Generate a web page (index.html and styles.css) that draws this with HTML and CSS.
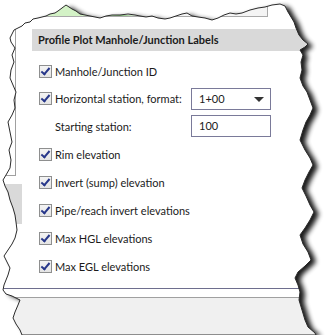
FILE: index.html
```html
<!DOCTYPE html>
<html lang="en">
<head>
  <meta name="viewport" content="width=device-width, initial-scale=1.0">
  <title>Profile Plot Manhole/Junction Labels</title>
  <link rel="stylesheet" href="styles.css">
</head>
<body>

  <div class="page">
    <!-- window behind, mostly torn away -->
    <div class="backdrop">
      <div class="backdrop-pane">
        <svg class="hill" width="120" height="17" viewBox="0 0 120 17">
          <polygon points="0,17 10,14 20,12 28,9 34,6 36,4 40,7 46,10 52,12 60,13 70,14 80,15 100,16 120,17" fill="#d3f2c6" stroke="#86c27a" stroke-width="1"/>
        </svg>
      </div>
    </div>

    <div class="middle">
      <div class="side">
        <div class="side-box"></div>
        <div class="side-gray"></div>
      </div>

      <div class="main">
        <div class="section-head">Profile Plot Manhole/Junction Labels</div>

        <div class="rows">
          <div class="row r1">
            <label class="check"><span class="box"></span>Manhole/Junction ID</label>
          </div>
          <div class="row r2">
            <label class="check"><span class="box"></span>Horizontal station, format:</label>
            <div class="select">1+00<span class="arrow"></span></div>
          </div>
          <div class="row r3">
            <span class="plain">Starting station:</span>
            <div class="input">100</div>
          </div>
          <div class="row">
            <label class="check"><span class="box"></span>Rim elevation</label>
          </div>
          <div class="row">
            <label class="check"><span class="box"></span>Invert (sump) elevation</label>
          </div>
          <div class="row">
            <label class="check"><span class="box"></span>Pipe/reach invert elevations</label>
          </div>
          <div class="row">
            <label class="check"><span class="box"></span>Max HGL elevations</label>
          </div>
          <div class="row">
            <label class="check"><span class="box"></span>Max EGL elevations</label>
          </div>
        </div>
      </div>
    </div>

    <div class="footer">
      <div class="footer-gap"></div>
      <div class="footer-bar"></div>
    </div>

    <!-- torn paper edge drawn over the screenshot -->
    <svg class="torn" width="325" height="335" viewBox="0 0 325 335">
      <defs>
        <polygon id="edge" points="12,34 14,30 18,28 22,26 25,23 30,22 33,19 38,18 42,17 46,16 50,14 55,13 58,11 62,8 66,5 69,7 72,9 76,11 80,14 85,15 90,16 95,17 100,18 106,16 112,15 120,15 128,14 135,15 140,16 146,17 152,16 158,18 165,19 170,18 176,16 182,14 187,13 192,16 198,17 205,18 212,20 218,18 224,15 230,13 236,14 242,13 250,10 258,8 265,7 272,5 280,4 285,6 288,12 291,17 294,22 296,28 299,35 303,40 308,44 305,47 300,50 303,55 301,62 302,70 300,78 303,86 307,92 310,100 313,108 310,115 306,122 303,130 300,140 305,150 310,158 313,165 309,172 305,180 302,188 306,196 310,205 314,212 310,220 305,228 300,235 303,244 308,252 311,260 305,266 298,272 295,278 298,285 300,292 299,300 302,310 305,320 308,327 315,333 316,335 22,335 20,330 16,324 13,318 15,312 18,305 20,300 12,296 6,294 3,290 4,285 6,280 8,275 10,268 7,262 4,256 8,250 12,244 15,238 17,230 16,222 15,215 13,208 10,200 8,192 5,186 3,180 6,175 10,168 11,160 9,150 12,142 10,132 8,122 12,115 15,108 14,100 16,92 13,85 10,78 11,70 14,62 12,55 15,48 11,42 10,38"/>
        <filter id="blur" x="-10%" y="-10%" width="120%" height="120%">
          <feGaussianBlur stdDeviation="2.5"/>
        </filter>
        <mask id="outside">
          <rect width="325" height="335" fill="#fff"/>
          <use href="#edge" fill="#000"/>
        </mask>
      </defs>
      <g mask="url(#outside)">
        <rect width="325" height="335" fill="#fff"/>
        <use href="#edge" fill="#000" opacity="0.9" transform="translate(5 2)" filter="url(#blur)"/>
      </g>
      <use href="#edge" fill="none" stroke="#2b2b2b" stroke-width="1"/>
    </svg>
  </div>

</body>
</html>
```

FILE: styles.css
```css
body {
  margin: 0;
  font-family: Lato, "Noto Sans", sans-serif;
  font-size: 11px;
  color: #1b1b1b;
  background: #fff;
}
.page {
  position: relative;
  width: 325px;
  height: 335px;
  overflow: hidden;
  display: flex;
  flex-direction: column;
}
.backdrop {
  height: 29px;
}
.backdrop-pane {
  width: 268px;
  height: 17px;
  background: #f4f4f4;
  border-right: 1px solid #a9a9a9;
  border-bottom: 1px solid #a9a9a9;
  box-sizing: border-box;
  position: relative;
  overflow: hidden;
}
.hill {
  position: absolute;
  left: 30px;
  top: 0;
}
.middle {
  display: flex;
  height: 259px;
}
.side {
  width: 32px;
  flex-shrink: 0;
  display: flex;
  flex-direction: column;
}
.side-box {
  width: 15px;
  height: 146px;
  border-right: 1px solid #a0a0a0;
  border-bottom: 1px solid #a0a0a0;
}
.side-gray {
  width: 22px;
  height: 40px;
  margin-top: 8px;
  background: #d9d9d9;
}
.main {
  flex: 1;
}
.section-head {
  height: 22px;
  line-height: 22px;
  background: #d9d9d9;
  font-weight: bold;
  padding-left: 6px;
}
.rows {
  padding: 6px 0 0 7px;
}
.row {
  display: flex;
  align-items: center;
  height: 28px;
}
.row.r2 {
  height: 27px;
}
.check {
  display: flex;
  align-items: center;
  gap: 3px;
  width: 152px;
  flex-shrink: 0;
  white-space: nowrap;
}
.box {
  flex-shrink: 0;
  width: 13px;
  height: 13px;
  box-sizing: border-box;
  border: 1px solid #8e8f8f;
  background: linear-gradient(#f4f4f4, #e4e4e4);
  position: relative;
}
.box::after {
  content: "";
  position: absolute;
  left: 3px;
  top: 0px;
  width: 3px;
  height: 7px;
  border-right: 2px solid #27378a;
  border-bottom: 2px solid #27378a;
  transform: rotate(40deg);
}
.plain {
  width: 152px;
  flex-shrink: 0;
  padding-left: 16px;
  box-sizing: border-box;
}
.select,
.input {
  width: 80px;
  height: 22px;
  flex-shrink: 0;
  box-sizing: border-box;
  border: 1px solid #7a7a99;
  padding-left: 7px;
  line-height: 20px;
  background: #fff;
  position: relative;
}
.arrow {
  position: absolute;
  right: 6px;
  top: 8px;
  width: 0;
  height: 0;
  border-left: 5px solid transparent;
  border-right: 5px solid transparent;
  border-top: 5px solid #333;
}
.footer {
  flex: 1;
  display: flex;
  flex-direction: column;
  border-top: 1px solid #6e6e8e;
}
.footer-gap {
  height: 8px;
}
.footer-bar {
  flex: 1;
  background: #f0f0f0;
  border-top: 1px solid #a0a0a0;
}
.torn {
  position: absolute;
  left: 0;
  top: 0;
}
```
